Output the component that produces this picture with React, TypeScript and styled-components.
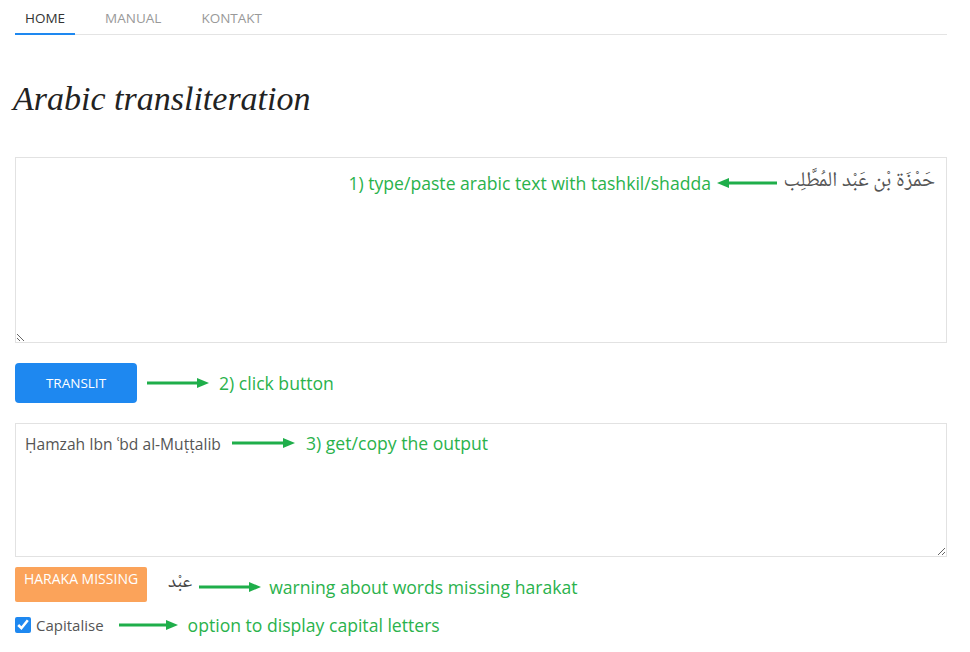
import React from "react";
import styled, { createGlobalStyle } from "styled-components";

const Global = createGlobalStyle`
  html, body { margin: 0; padding: 0; background: #fff; }
  body { font-family: "Open Sans", "Noto Sans", sans-serif; color: #555; }
  * { box-sizing: border-box; }
`;

const ARABIC = `"Noto Naskh Arabic", "Amiri", "Scheherazade New", "DejaVu Sans", serif`;

const Page = styled.div`
  width: 970px;
  padding: 0 23px 0 15px;
`;

const Nav = styled.nav`
  display: flex;
  gap: 20px;
  height: 35px;
  border-bottom: 1px solid #e4e4e4;
`;

const Tab = styled.a<{ $active?: boolean }>`
  display: flex;
  align-items: center;
  padding: 3px 10px 0;
  font-size: 13.5px;
  text-decoration: none;
  color: ${(p) => (p.$active ? "#333" : "#999")};
  border-bottom: 2px solid ${(p) => (p.$active ? "#1e88f0" : "transparent")};
  margin-bottom: -1px;
`;

const Title = styled.h1`
  margin: 42px 0 0 -2px;
  font-family: "Liberation Serif", "DejaVu Serif", serif;
  font-style: italic;
  font-weight: 400;
  font-size: 34px;
  line-height: 44px;
  color: #222;
`;

const Field = styled.div`
  position: relative;
  margin-top: 36px;
`;

const Area = styled.textarea<{ $h: number }>`
  display: block;
  width: 100%;
  height: ${(p) => p.$h}px;
  border: 1px solid #e2e2e2;
  border-radius: 0;
  outline: none;
  color: #555;
  background: #fff;
`;

const ArabicArea = styled(Area)`
  padding: 4px 11px;
  font-family: ${ARABIC};
  font-size: 21px;
  line-height: 40px;
`;

const OutputArea = styled(Area)`
  padding: 9px 9px;
  font-family: "Open Sans", "Noto Sans", sans-serif;
  font-size: 15.6px;
  line-height: 22px;
`;

const Note = styled.div<{ $gap?: number }>`
  display: flex;
  align-items: center;
  gap: ${(p) => p.$gap ?? 10}px;
  font-family: "Open Sans", "Noto Sans", sans-serif;
  font-size: 17.6px;
  color: #2ab24c;
  white-space: nowrap;
`;

const Overlay = styled(Note)<{ $top: number; $left?: number; $right?: number }>`
  position: absolute;
  top: ${(p) => p.$top}px;
  ${(p) => (p.$left !== undefined ? `left: ${p.$left}px;` : "")}
  ${(p) => (p.$right !== undefined ? `right: ${p.$right}px;` : "")}
  pointer-events: none;
`;

const Row = styled.div<{ $mt: number; $align?: string }>`
  display: flex;
  align-items: ${(p) => p.$align || "center"};
  margin-top: ${(p) => p.$mt}px;
`;

const Button = styled.button`
  width: 122px;
  height: 40px;
  border: none;
  border-radius: 4px;
  background: #1e88f0;
  color: #fff;
  font-family: "Open Sans", "Noto Sans", sans-serif;
  font-size: 13.5px;
  text-transform: uppercase;
  margin-right: 10px;
`;

const Badge = styled.div`
  width: 132px;
  height: 35px;
  padding-top: 2px;
  background: #fba35a;
  border-radius: 2px;
  color: #fff;
  font-size: 14px;
  text-align: center;
  text-transform: uppercase;
  margin-right: 21px;
`;

const ArabicWord = styled.span`
  font-family: ${ARABIC};
  font-size: 19px;
  color: #444;
  margin-right: 7px;
`;

const Check = styled.label`
  display: flex;
  align-items: center;
  gap: 5px;
  font-size: 15px;
  color: #555;
  margin-right: 15px;
  input {
    margin: 0;
    width: 16px;
    height: 16px;
    accent-color: #1e88f0;
  }
`;

const Arrow = ({ w, dir = "right" }: { w: number; dir?: "left" | "right" }) => (
  <svg width={w} height="10" viewBox={`0 0 ${w} 10`} style={{ flex: "none" }}>
    {dir === "right" ? (
      <>
        <line x1="0" y1="5" x2={w - 10} y2="5" stroke="#1fae4a" strokeWidth="3" />
        <polygon points={`${w - 12},0 ${w},5 ${w - 12},10`} fill="#1fae4a" />
      </>
    ) : (
      <>
        <line x1="10" y1="5" x2={w} y2="5" stroke="#1fae4a" strokeWidth="3" />
        <polygon points={`12,0 0,5 12,10`} fill="#1fae4a" />
      </>
    )}
  </svg>
);

export default function App() {
  return (
    <Page>
      <Global />
      <Nav>
        <Tab $active>HOME</Tab>
        <Tab>MANUAL</Tab>
        <Tab>KONTAKT</Tab>
      </Nav>
      <Title>Arabic transliteration</Title>
      <Field>
        <ArabicArea $h={186} dir="rtl" defaultValue="حَمْزَة بْن عَبْد المُطَّلِب" />
        <Overlay $top={14} $right={170} $gap={6}>
          <span>1) type/paste arabic text with tashkil/shadda</span>
          <Arrow w={60} dir="left" />
        </Overlay>
      </Field>
      <Row $mt={20}>
        <Button>Translit</Button>
        <Note>
          <Arrow w={62} />
          <span>2) click button</span>
        </Note>
      </Row>
      <Field style={{ marginTop: 20 }}>
        <OutputArea $h={134} defaultValue="Ḥamzah Ibn ʿbd al-Muṭṭalib" />
        <Overlay $top={8} $left={217} $gap={11}>
          <Arrow w={63} />
          <span>3) get/copy the output</span>
        </Overlay>
      </Field>
      <Row $mt={10} $align="flex-start">
        <Badge>Haraka missing</Badge>
        <ArabicWord>عبْد</ArabicWord>
        <Note style={{ marginTop: 8 }} $gap={8}>
          <Arrow w={62} />
          <span>warning about words missing harakat</span>
        </Note>
      </Row>
      <Row $mt={11}>
        <Check>
          <input type="checkbox" defaultChecked />
          Capitalise
        </Check>
        <Note $gap={10}>
          <Arrow w={59} />
          <span>option to display capital letters</span>
        </Note>
      </Row>
    </Page>
  );
}
